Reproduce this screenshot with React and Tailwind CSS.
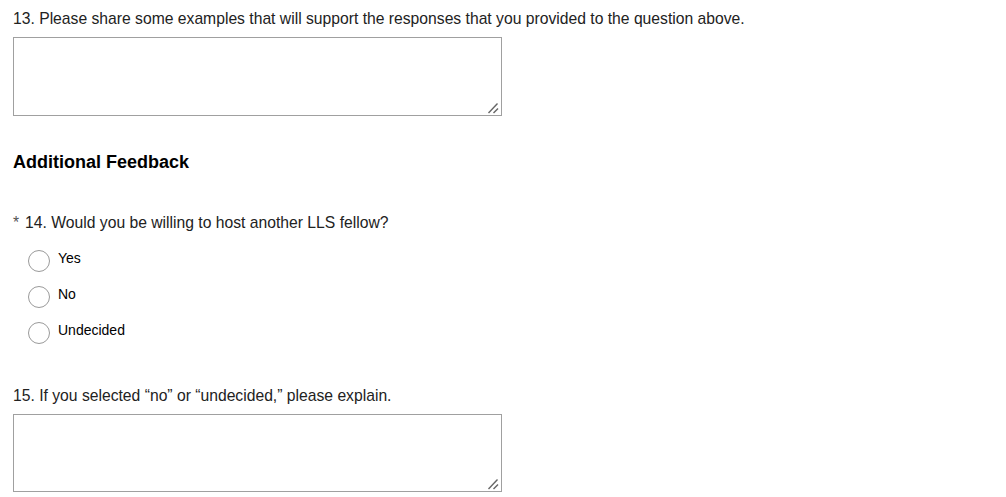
function Grip() {
  return (
    <svg className="absolute right-[3px] bottom-[2px] pointer-events-none" width="12" height="12" viewBox="0 0 12 12">
      <line x1="1.5" y1="11" x2="10.5" y2="1.5" stroke="#666" strokeWidth="1.4" />
      <line x1="6.5" y1="11" x2="11" y2="6.5" stroke="#666" strokeWidth="1.4" />
    </svg>
  );
}

export default function App() {
  const opts = ["Yes", "No", "Undecided"];
  return (
    <div className="font-['Arial','Liberation_Sans',sans-serif] text-[#222] bg-white min-h-[497px] pl-[13px] pt-[9px]">
      <p className="text-[15.7px] leading-[20px]">
        13. Please share some examples that will support the responses that you provided to the question above.
      </p>
      <div className="relative mt-[8px] w-[489px]">
        <textarea className="block w-[489px] h-[79px] border border-[#a0a0a0] bg-white resize-none" />
        <Grip />
      </div>
      <h2 className="mt-[35px] text-[18px] leading-[22px] font-bold text-black">Additional Feedback</h2>
      <p className="mt-[40px] text-[15.7px] leading-[20px]">
        <span className="text-[#555] mr-[6px]">*</span>14. Would you be willing to host another LLS fellow?
      </p>
      <div className="mt-[17px] ml-[15px] flex flex-col gap-[14px]">
        {opts.map((o) => (
          <div key={o} className="flex items-start gap-[8px]">
            <div className="w-[22px] h-[22px] rounded-full border border-[#9a9a9a] bg-white" />
            <span className="text-[14px] leading-[16px] text-black">{o}</span>
          </div>
        ))}
      </div>
      <p className="mt-[42px] text-[15.7px] leading-[20px]">
        15. If you selected “no” or “undecided,” please explain.
      </p>
      <div className="relative mt-[8px] w-[489px]">
        <textarea className="block w-[489px] h-[78px] border border-[#a0a0a0] bg-white resize-none" />
        <Grip />
      </div>
    </div>
  );
}
